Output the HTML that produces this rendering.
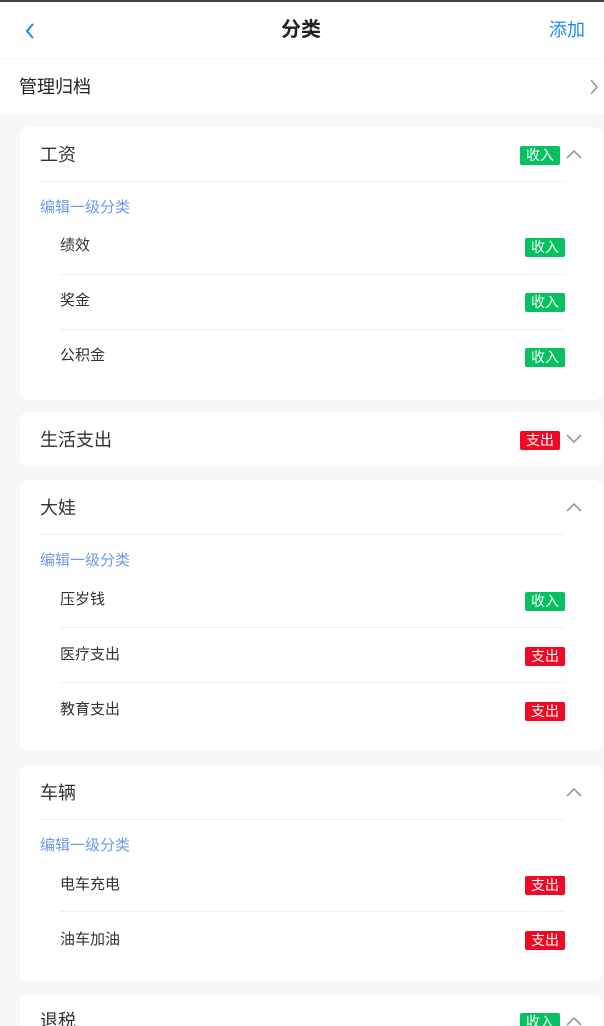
<!DOCTYPE html>
<html style="overflow:hidden;height:1026px"><head><meta charset="utf-8"><style>
*{margin:0;padding:0;box-sizing:border-box}
body{width:604px;height:1026px;overflow:hidden;background:#f6f7f9;font-family:"Liberation Sans","Noto Sans CJK SC",sans-serif;position:relative;color:#333}
.a{position:absolute}
.top{left:0;top:0;width:604px;height:2px;background:#444}
.hdr{left:0;top:2px;width:604px;height:56px;background:#fff}
.card{position:absolute;left:20px;width:582px;background:#fff;border-radius:8px}
.t18{font-size:18px;line-height:20px}
.t14{font-size:15px;line-height:16px}
.b{position:absolute;height:19px;width:40px;border-radius:2px;color:#fff;font-size:14px;line-height:19px;text-align:center}
.g{background:#07c160}.r{background:#ee0a24}
.ln{position:absolute;height:1px;background:#eef0f2}
</style></head><body>
<div class="a top"></div>
<div class="a hdr"></div>
<svg class="a" style="left:24px;top:22px" width="12" height="18" viewBox="0 0 12 18"><path d="M9 2 L3 9 L9 16" fill="none" stroke="#1989fa" stroke-width="2"/></svg>
<div class="a" style="left:281px;top:19px;font-size:20px;line-height:22px;font-weight:bold;color:#222">分类</div>
<div class="a t18" style="left:549px;top:20px;color:#1989fa">添加</div>
<div class="a" style="left:0;top:59px;width:604px;height:55px;background:#fff"></div>
<div class="a t18" style="left:19px;top:77px;color:#222">管理归档</div>
<svg class="a" style="left:588px;top:78px" width="12" height="18" viewBox="0 0 12 18"><path d="M3 2 L9 9 L3 16" fill="none" stroke="#999" stroke-width="1.6"/></svg>

<div class="card" style="top:127px;height:273px"></div>
<div class="a t18" style="left:40px;top:145px">工资</div>
<div class="b g" style="left:520px;top:146px">收入</div>
<svg class="a" style="left:566px;top:148px" width="16" height="12"><path d="M1 10 L8 3 L15 10" fill="none" stroke="#999" stroke-width="1.6"/></svg>
<div class="ln" style="left:40px;top:181px;width:525px"></div>
<div class="a t14" style="left:40px;top:200px;color:#6d9be6">编辑一级分类</div>
<div class="a t14" style="left:60px;top:238px">绩效</div><div class="b g" style="left:525px;top:238px">收入</div>
<div class="ln" style="left:60px;top:274px;width:505px"></div>
<div class="a t14" style="left:60px;top:293px">奖金</div><div class="b g" style="left:525px;top:293px">收入</div>
<div class="ln" style="left:60px;top:329px;width:505px"></div>
<div class="a t14" style="left:60px;top:348px">公积金</div><div class="b g" style="left:525px;top:348px">收入</div>

<div class="card" style="top:412px;height:54px"></div>
<div class="a t18" style="left:40px;top:430px">生活支出</div>
<div class="b r" style="left:520px;top:431px">支出</div>
<svg class="a" style="left:566px;top:433px" width="16" height="12"><path d="M1 2 L8 9 L15 2" fill="none" stroke="#999" stroke-width="1.6"/></svg>

<div class="card" style="top:480px;height:271px"></div>
<div class="a t18" style="left:40px;top:498px">大娃</div>
<svg class="a" style="left:566px;top:501px" width="16" height="12"><path d="M1 10 L8 3 L15 10" fill="none" stroke="#999" stroke-width="1.6"/></svg>
<div class="ln" style="left:40px;top:534px;width:525px"></div>
<div class="a t14" style="left:40px;top:553px;color:#6d9be6">编辑一级分类</div>
<div class="a t14" style="left:60px;top:592px">压岁钱</div><div class="b g" style="left:525px;top:592px">收入</div>
<div class="ln" style="left:60px;top:627px;width:505px"></div>
<div class="a t14" style="left:60px;top:647px">医疗支出</div><div class="b r" style="left:525px;top:647px">支出</div>
<div class="ln" style="left:60px;top:682px;width:505px"></div>
<div class="a t14" style="left:60px;top:702px">教育支出</div><div class="b r" style="left:525px;top:702px">支出</div>

<div class="card" style="top:765px;height:216px"></div>
<div class="a t18" style="left:40px;top:783px">车辆</div>
<svg class="a" style="left:566px;top:786px" width="16" height="12"><path d="M1 10 L8 3 L15 10" fill="none" stroke="#999" stroke-width="1.6"/></svg>
<div class="ln" style="left:40px;top:819px;width:525px"></div>
<div class="a t14" style="left:40px;top:838px;color:#6d9be6">编辑一级分类</div>
<div class="a t14" style="left:60px;top:877px">电车充电</div><div class="b r" style="left:525px;top:876px">支出</div>
<div class="ln" style="left:60px;top:911px;width:505px"></div>
<div class="a t14" style="left:60px;top:932px">油车加油</div><div class="b r" style="left:525px;top:931px">支出</div>

<div class="card" style="top:995px;height:31px;border-radius:8px 8px 0 0"></div>
<div class="a t18" style="left:40px;top:1011px">退税</div>
<div class="b g" style="left:520px;top:1013px">收入</div>
<svg class="a" style="left:566px;top:1015px" width="16" height="11"><path d="M1 10 L8 3 L15 10" fill="none" stroke="#999" stroke-width="1.6"/></svg>
</body></html>
